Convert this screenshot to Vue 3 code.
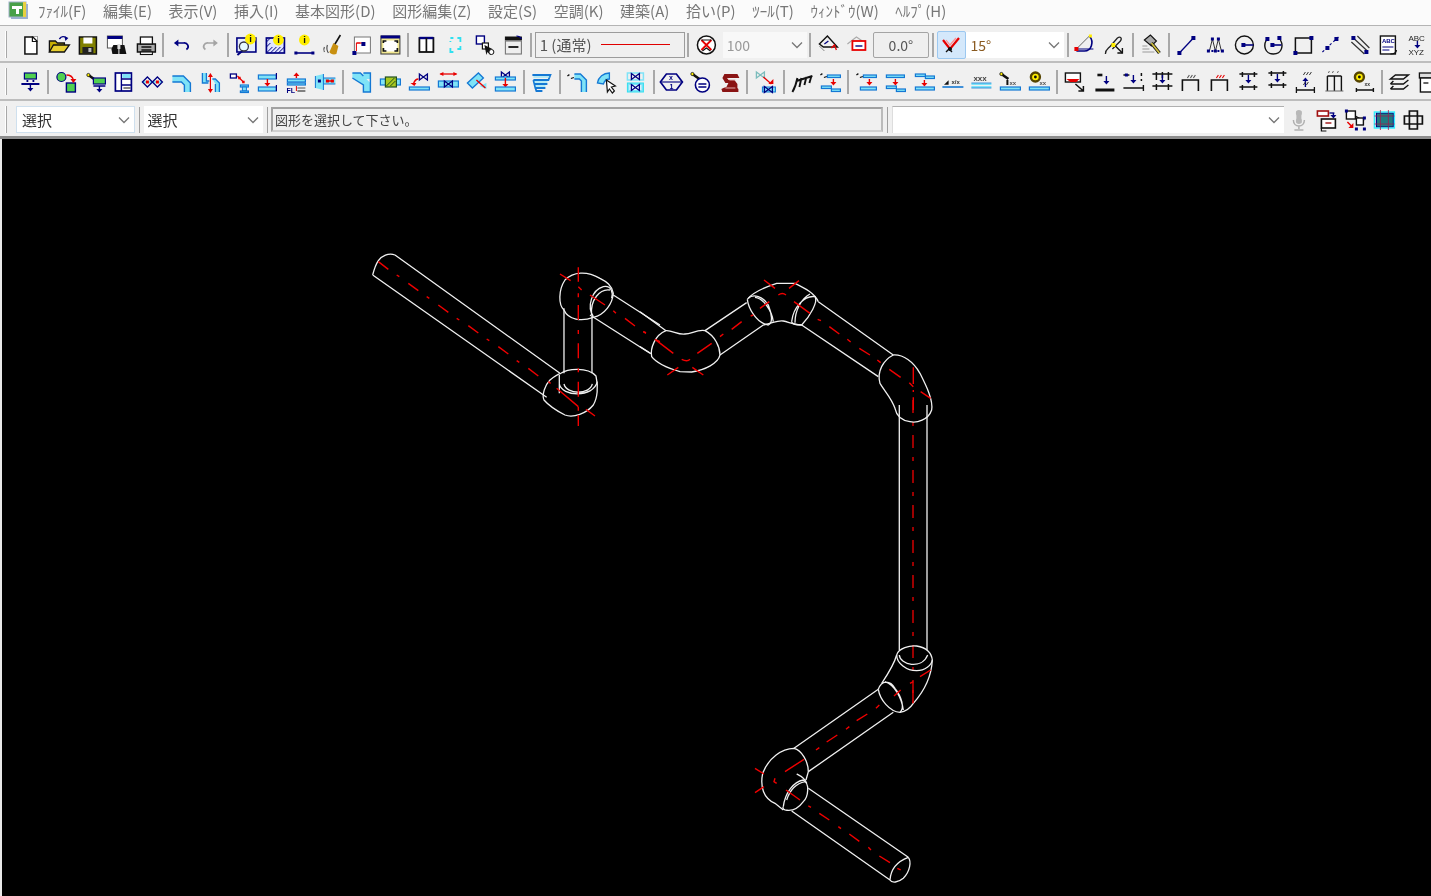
<script setup>
const NAVY = '#000080', CY = '#7fe3f7', BL = '#1478d4', RED = '#e80000', YE = '#ffee00', BK = '#111'
const l = (d, c = BK, w = 1.4) => `<path d="${d}" fill="none" stroke="${c}" stroke-width="${w}"/>`
const f = (d, c = BK) => `<path d="${d}" fill="${c}"/>`
const r = (x, y, w, h, fl = 'none', s = BK, sw = 1.4) => `<rect x="${x}" y="${y}" width="${w}" height="${h}" fill="${fl}" stroke="${s}" stroke-width="${sw}"/>`
const c = (x, y, rd, fl = 'none', s = BK, sw = 1.4) => `<circle cx="${x}" cy="${y}" r="${rd}" fill="${fl}" stroke="${s}" stroke-width="${sw}"/>`
const t = (x, y, s, sz = 6, col = BK, w = 700) => `<text x="${x}" y="${y}" font-size="${sz}" fill="${col}" font-weight="${w}" font-family="Liberation Sans, sans-serif">${s}</text>`
const dn = (x, y1, y2, col = NAVY) => l(`M${x} ${y1}V${y2 - 2}`, col, 1.4) + f(`M${x - 3} ${y2 - 3}h6l-3 3.5z`, col)
const up = (x, y1, y2, col = NAVY) => l(`M${x} ${y1}V${y2 + 2}`, col, 1.4) + f(`M${x - 3} ${y2 + 3}h6l-3 -3.5z`, col)
const duct = (x, y, w, h = 4) => r(x, y, w, h, CY, BL, 1.2)
const dot = (x, y, s = 3, col = NAVY) => `<rect x="${x - s / 2}" y="${y - s / 2}" width="${s}" height="${s}" fill="${col}"/>`
const info = (x, y) => c(x, y, 5.4, YE, 'none', 0) + t(x - 1.2, y + 3.4, 'i', 9.5, BK)
const valve = (x, y, col = NAVY) => l(`M${x - 4} ${y - 3}v6l8 -6v6z`, col, 1.3)
const gear = (x, y) => c(x, y, 4.5, YE, '#554400', 2.4) + c(x, y, 1.4, BK, 'none', 0)
const wrench = (x, y) => l(`M${x} ${y}l7 5`, BK, 2.6) + c(x, y, 1.6, YE, BK, .8)
const xx = (x, y, n = 'xx') => t(x, y, n, 6, '#555', 700)
const greenBox = (x, y) => r(x, y, 12, 6, '#50d050', NAVY, 1.2)
const dash3 = (x, y) => l(`M${x} ${y}l2 -1.4M${x + 3.5} ${y + 2.5}l3 -1`, BK, 1.3)
const arch = (col = BK) => l('M4 21V10H20V21', BK, 1.6) + l('M9 8l2 -3M12 8l2 -3M15 8l2 -3', col === BK ? '#555' : col, 1.1)

const icons = {
  new: r(6.5, 4, 12, 17, '#fff', BK, 1.5) + f('M14 3.5h5v5z', '#fff') + l('M14 3.5v5h5M14 3.5l5 5', BK, 1.2),
  open: f('M3 8h6l2 2h7v9H3z', '#c8b000') + l('M3 19V8h6l2 2h7v3', BK, 1.3) + f('M3 19l4 -7h16l-5 7z', '#e8d030') + l('M3 19l4 -7h16l-5 7z', BK, 1.3) + l('M13 6c2 -3 5 -3 7 -1', NAVY, 1.4) + f('M18 3l4 2 -3 3z', NAVY),
  save: r(4, 4, 17, 17, '#808000', BK, 1.5) + r(8, 4.5, 9, 6, '#fff', 'none', 0) + r(7, 14, 11, 6.5, '#222', 'none', 0) + r(13, 15, 3, 4, '#bbb', 'none', 0),
  find: r(3, 3, 15, 12, '#fff', '#555', 1) + r(3, 3, 15, 3, NAVY, 'none', 0) + f('M9 12h5v9H8l-1 -5zM15 12h5l2 9h-7z', BK) + r(13, 11, 3, 5, '#ddd', 'none', 0),
  print: f('M4 11h18v8H4z', '#aaa') + l('M4 11h18v8H4z', BK, 1.4) + r(7, 4, 12, 7, '#fff', BK, 1.3) + l('M8 14h10M8 17h10', BK, 1.4) + r(7, 19, 12, 2.5, '#fff', BK, 1.1),
  undo: l('M8 10h6a4 3.6 0 0 1 3 6.5', NAVY, 1.7) + f('M9 6.5v7L4.5 10z', NAVY),
  redo: l('M16 10h-6a4 3.6 0 0 0 -3 6.5', '#a4a4a4', 1.7) + f('M15 6.5v7L19.5 10z', '#a4a4a4'),
  zinfo: r(2.5, 5, 19, 14, '#e6eefc', NAVY, 1.6) + l('M8 18l-5 4', NAVY, 2) + c(9.5, 13.5, 4.5, '#e4f8ff', '#334', 1.3) + info(16, 6),
  hinfo: r(3, 5, 18, 15, '#dfe4ff', NAVY, 1.7) + l('M3 20l6 -6M7 20l6 -6M11 20l6 -6M15 20l6 -6M3 9l4 -4M3 14l4 -4', NAVY, 1) + info(15, 7),
  dinfo: info(12, 7) + l('M3 20H21', NAVY, 1.6) + dot(3.5, 20) + dot(20.5, 20),
  brush: l('M4 14c-1 2 -1 3 0 5M7 12c-1 3 -1 5 1 8', '#444', 1.1) + l('M20 2l-6 10', BK, 1.6) + f('M13 10l5 3 -2 8c-3 1 -6 0 -7 -2z', '#c89010'),
  sel: r(5, 4, 16, 16, '#fff', '#777', 1) + l('M7 18V10h6M7 10h4', RED, 1) + dot(14, 11, 4) + dot(5, 20, 4),
  full: r(2.5, 3, 19, 18, '#f2e890', '#444', 1.1) + r(2.5, 2.5, 19, 3, NAVY, 'none', 0) + r(5, 7.5, 14, 11, '#fff', 'none', 0) + l('M5 10V8h3M16 8h3v2M5 15v3h3M16 18h3v-3', BK, 1.7),
  panes: r(5, 5, 14, 14, '#fff', BK, 1.8) + l('M5 5h14', NAVY, 2.4) + l('M12 5v14', BK, 1.7),
  cyan: l('M7 5h3M14 5h3v4M17 13v3h-3M10 19h-3v-4M7 9v-1', '#30e0f0', 1.8),
  ovl: r(4, 3, 8, 8, '#fff', NAVY, 1.4) + r(10, 10, 6, 6, '#fff', BK, 1.2) + f('M12 12l8 4 -3 1 3 3 -2 2 -3 -3 -1 3z', BK) + c(19, 19, 2.5, '#fff', BK, 1),
  stack: r(4, 4, 16, 3, BK, BK, 1) + r(4, 8, 16, 13, '#eee', '#777', 1.1) + l('M7 14H17', BK, 1.8) + l('M15 3c3 0 4 1 5 3', NAVY, 1.1),
  norep: c(12, 12, 9, '#fff', BK, 1.5) + l('M7 7l10 10M17 7L7 17', RED, 1.8) + l('M8 18l4 -3 4 3', BK, 1.1) + l('M7 7h10', BK, 1),
  diamond: l('M3 11L11 3l10 11H7z', BK, 1.4) + l('M8 11l4 -3', NAVY, 1.3) + l('M15 15l3 -3 2 5', RED, 1.3) + l('M3 13l5 5', '#888', 1),
  tag: l('M2 11l9 -7 6 4', '#aaa', 1.1) + r(7, 8, 13, 9, '#fff', RED, 1.8) + l('M10 13H17', NAVY, 1.4),
  check: l('M4 7l7 9 9 -11', RED, 2.2) + l('M7 7l4 5 6 -7', '#ff9090', 1.2) + l('M7 19l3 -3 3 3', BK, 1.4) + c(11, 16, 2, BK, 'none', 0),
  arc: l('M3 16L16 3', '#555', .9) + l('M16 3c5 6 2 15 -5 15H3', NAVY, 1.6) + l('M3 16L20 16', NAVY, 1) + dot(3, 16, 4, RED) + dot(17, 3, 3, YE),
  cut: l('M3 21c0 -5 3 -5 6 -9l6 -7c3 -2 5 0 3 3l-8 8', '#222', 1.3) + dot(11, 12, 4, YE) + l('M13 13l7 7', BK, 1.4) + l('M20 15v5h-5', BK, 1.4),
  hammer: l('M4 19H16M4 16H11M4 13H9', '#999', 1.2) + f('M6 7l6 -5 6 6 -5 5z', '#aaa') + l('M6 7l6 -5 6 6 -5 5z', BK, 1.2) + l('M13 10l8 10', BK, 3.4) + l('M13 10l8 10', '#d0c040', 1.8),
  line: l('M5 20L19 5', NAVY, 1.3) + dot(5, 20, 4) + dot(19, 5, 4),
  mm: l('M6 18L9 6l3 12 3 -12 3 12', '#333', 1) + [5, 12, 19].map(x => dot(x, 18, 3)).join('') + [9, 15].map(x => dot(x, 6, 3)).join('') + dot(9, 18, 2) + dot(15, 18, 2),
  circ: c(12, 12, 9, 'none', BK, 1.4) + l('M12 12H21', NAVY, 1.6) + dot(11, 12, 4),
  arc2: l('M5 7c-3 5 -2 14 7 14s10 -9 7 -14', BK, 1.4) + l('M12 12H20', NAVY, 1.6) + dot(11, 12, 4) + dot(6, 6, 4) + dot(18, 5, 4),
  rect: r(5, 5, 16, 15, 'none', BK, 1.5) + dot(5, 20, 4) + dot(21, 5, 4),
  dline: `<path d="M4 19L20 4" fill="none" stroke="${NAVY}" stroke-width="1.1" stroke-dasharray="2.5 2.5"/>` + dot(9, 15, 4) + dot(18, 6, 4),
  par: l('M4 9L17 21M7 6L20 18M10 3L22 15', '#333', 1.2) + dot(6, 5, 4) + dot(19, 19, 4),
  abc: r(4, 3, 15, 18, '#fff', BK, 1.4) + t(5.5, 10, 'ABC', 6, NAVY) + l('M6 14H17M6 17H13', NAVY, 1.2) + l('M14 21c3 0 6 -1 6 -4', BK, 1.2),
  abcx: t(3, 8, 'ABC', 8, '#222', 400) + dn(12, 8, 15) + t(3, 22, 'XYZ', 8, '#222', 400),

  mach: greenBox(6, 3) + l('M9 10v2M15 10v2M3 14H21', NAVY, 1.8) + dn(12, 14, 21),
  swap: c(7, 7, 4.5, '#50d050', NAVY, 1.2) + r(12, 13, 9, 9, '#50d050', NAVY, 1.4) + l('M12 5c4 0 6 1 7 5', RED, 1.3) + f('M16 9h6l-3 4z', RED),
  mwr: wrench(5, 5) + greenBox(10, 8) + l('M10 16H22', NAVY, 1.5) + dn(16, 16, 22),
  table: r(4, 3, 16, 18, '#fff', NAVY, 1.7) + l('M10 3v18M10 9H20M10 15H20', NAVY, 1.4) + r(11, 4, 8, 4, CY, 'none', 0) + l('M12 18H19', BK, 1),
  dmd: l('M2 12H22', CY, 2) + l('M2 12l5 -5 5 5 -5 5z', NAVY, 1.3) + l('M12 12l5 -5 5 5 -5 5z', NAVY, 1.3) + dot(7, 12, 3, RED) + dot(17, 12, 3, RED),
  elbow: f('M3 6h11l7 7v9h-6v-7l-3 -3H3z', CY) + l('M3 6h11l7 7v9M3 12h9l3 3v7', BL, 1.4),
  riser: f('M4 3v10l6 0v-2H8V3zM14 9h3l4 4v9h-4v-8z', CY) + l('M4 3v10h6M8 3v8h3M14 9h3l4 4v9M17 22v-8', BL, 1.3) + l('M12 5V21', RED, 1.2) + f('M9.5 7h5L12 3zM9.5 19h5L12 23z', RED),
  stub: r(3, 4, 6, 4, '#fff', NAVY, 1.3) + l('M10 6l6 6', RED, 1.2) + dot(12, 8, 2.5, RED) + dot(16, 12, 2.5, RED) + duct(13, 15, 8, 2) + r(15, 17, 4, 4, CY, BL, 1) + duct(13, 21, 8, 1.5),
  twin: duct(3, 5, 18) + duct(3, 17, 18) + l('M21 3v6M21 15v6', NAVY, 1.2) + dn(12, 9, 16, RED),
  fl: duct(3, 9, 18, 3) + duct(3, 13, 18, 2) + up(12, 8, 3, RED) + t(2, 23, 'FL', 7, NAVY) + l('M12 21V16', RED, 1) + l('M13 21h8', BK, 1) + l('M13 18h8', '#555', 1),
  dctr: f('M2 6l8 -2v16l-8 -2zM10 8H22v6H10z', CY) + l('M10 4v16M10 8H22M10 14H22M2 6v12', BL, 1) + dot(6, 11, 3, NAVY) + l('M13 11H20', RED, 1.5) + dot(14, 11, 3, RED) + dot(19, 11, 3, RED),
  ysh: f('M3 3h8l10 10v9h-7v-7L3 8zM14 3h7v6h-7z', CY) + l('M3 3h8l3 3M14 3h7v19h-7v-7L3 8', BL, 1.4),
  hatch: duct(2, 9, 20, 6) + r(7, 7, 11, 10, '#a8c820', '#205020', 1.2) + l('M8 16l8 -8M12 16l5 -5', '#205020', 1),
  valvu: duct(2, 17, 20, 3) + valve(16, 7) + l('M6 14c1 -3 3 -5 5 -5', RED, 1.4) + f('M3 13h6l-2 3z', RED),
  arrv: l('M4 4H20', RED, 1.3) + f('M3 4l4 -2v4zM21 4l-4 -2v4z', RED) + duct(2, 11, 20, 6) + valve(12, 14),
  diag: f('M3 13L14 3l5 5L8 18zM15 16l7 -3v6z', CY) + l('M3 13L14 3l5 5L8 18z', BL, 1.3) + l('M12 10l9 8', RED, 1.4),
  vctr: valve(12, 5) + duct(2, 7, 20, 3) + dn(12, 8, 17, RED) + duct(2, 17, 20, 4),
  slant: l('M3 5H21L19 10H4M4 10l1 4H18M5 14l1 4H16M6 18l1 3h6', BL, 1.8) + l('M4 7H20M5 12H18M6 16H16', CY, 1.2),
  dselb: dash3(2, 6) + f('M9 4h6l6 6v12h-5V11l-2 -2H9z', CY) + l('M9 4h6l6 6v12M9 9h5l2 2v11', BL, 1.4),
  arcc: f('M3 13C4 7 9 3 15 3v6c-3 0 -5 2 -6 5z', CY) + l('M3 13C4 7 9 3 15 3v6c-3 0 -5 2 -6 5z', BL, 1.3) + f('M12 10l9 6 -4 1 3 4 -2 2 -3 -4 -2 3z', '#fff') + l('M12 10l9 6 -4 1 3 4 -2 2 -3 -4 -2 3z', BK, 1.2),
  vbox: r(4, 3, 16, 7, 'none', CY, 1.5) + valve(12, 6.5, NAVY) + r(4, 13, 16, 9, CY, '#30e0f0', 1) + r(6, 15, 12, 5, '#e8faff', 'none', 0) + valve(12, 17.5, NAVY),
  hex: l('M7 4H17L23 12 17 20H7L1 12z', NAVY, 1.7) + l('M2 12H22', NAVY, 1.1) + t(9.5, 10, 'x', 7, NAVY) + t(10, 18.5, '1', 7, NAVY),
  wcirc: wrench(4, 4) + c(14, 15, 7, '#fff', NAVY, 1.6) + l('M10 14H18M10 17H18', NAVY, 1.5),
  beam: f('M7 4h13l2 4H10l1 2h6l3 4v4l1 1v3H5l-1 -3 2 -1 3 -1 2 -4H8L5 8z', '#8a1414') + l('M10 8l2 2h6M8 18h10', '#e0b0b0', 1),
  vpale: valve(7, 5, '#7bbcbc') + l('M10 7l8 7', RED, 1.3) + f('M15 14h5v-5z', RED) + r(9, 17, 13, 5, CY, BL, 1) + valve(15, 19.5),
  hash: l('M3 22C6 17 7 13 8 8M10 17l2 -9M15 15l2 -8M20 13l2 -7M7 11L23 6', BK, 1.9),
  dd: dash3(2, 5) + duct(9, 5, 13, 2.5) + dn(15, 9, 15, RED) + duct(3, 16, 10, 2.5) + duct(13, 19, 9, 2.5),
  dd2: dash3(2, 5) + duct(9, 5, 13, 2.5) + dn(15, 9, 15, RED) + duct(6, 17, 16, 3),
  dd3: duct(3, 5, 18, 2.5) + dn(12, 9, 15, RED) + duct(3, 16, 10, 2.5) + duct(13, 19, 9, 2.5),
  dd4: duct(3, 4, 10, 2.5) + duct(13, 6, 9, 2.5) + dn(12, 10, 16, RED) + duct(3, 17, 19, 3),
  dxx: t(3, 14, '◢', 6, BK, 400) + t(10, 14, 'x/x', 6, '#333') + l('M1 17H22', BL, 1.6),
  xxx: t(4, 11, 'xxx', 8, '#444') + l('M2 14H22', CY, 2) + l('M2 17H22', CY, 2) + l('M2 13H22M2 18H22', BL, .8),
  wxx: wrench(3, 4) + l('M9 10v5', BK, 2) + xx(11, 15) + duct(2, 17, 20, 3),
  gxx: gear(8, 7) + xx(12, 15) + duct(2, 17, 20, 3),
  red: r(2, 3, 15, 9, '#fff', BK, 1.4) + f('M3 9h13l-3 3H7z', RED) + l('M12 14l8 7M20 16v5h-5', BK, 1.5),
  barr: l('M5 5h5', BK, 2.6) + dn(14, 6, 14) + l('M3 20H22', BK, 3),
  barm: l('M2 5H8M2 18H22M22 15v6', BK, 1.4) + dot(5, 5, 3) + dn(12, 5, 13) + l('M20 3v3M20 9v2', BK, 1.5),
  hh: l('M2 4H22M2 16H22M6 2v8M12 2v6M18 2v8M6 14v6M18 14v6', BK, 1.5) + dn(12, 5, 13),
  ar1: arch(),
  ar2: arch(RED),
  ar3: l('M3 4H21M3 17H21M6 2v5M18 2v5M6 15v5M18 15v5', BK, 1.5) + dn(12, 5, 13),
  ar4: l('M3 3H21M3 15H21M6 1v5M18 1v5M6 13v5M18 13v5', BK, 1.5) + dn(12, 4, 12),
  ar5: l('M3 20H21M3 17v6M21 17v6', BK, 1.3) + up(12, 17, 8) + l('M10 5l2 -3M13 5l2 -3M16 5l2 -3M10 15l2 -3M13 15l2 -3', '#333', 1),
  ar6: l('M5 6V21M12 6V21M19 6V21M5 6H19', BK, 1.4) + l('M6 3l1 -2M10 3l1 -2M15 3l1 -2M3 21H21', '#666', 1),
  ar7: gear(8, 7) + l('M5 20H22M5 18v4M22 18v4', BK, 1.4) + t(13, 16, 'xx', 5, '#333'),
  lay: l('M3 9l5 -4H21l-5 4zM3 14H16l5 -4M3 14l3 -3M3 19H16l5 -4M3 19l3 -3', BK, 1.4),
  box: r(3, 3, 18, 5, '#ddd', BK, 1.3) + r(4, 8, 16, 14, '#fff', BK, 1.4) + l('M7 13H12', BK, 1.3),

  mic: r(10, 3, 5, 12, '#b8b8b8', 'none', 0) + c(12.5, 5, 3, '#b8b8b8', 'none', 0) + c(12.5, 13, 3, '#b8b8b8', 'none', 0) + l('M7 12c0 8 11 8 11 0M12.5 18v3M8 22H17', '#b0b0b0', 1.5),
  moveBox: r(3, 3, 11, 5, '#fff', '#a01010', 1.6) + l('M15 5H20', NAVY, 1.3) + dn(19, 5, 10) + r(7, 11, 14, 9, '#fff', BK, 1.6) + l('M7 20v3h5', BK, 1.2) + l('M11 15H17', '#a01010', 1.4),
  dotBox: r(3, 3, 9, 8, '#fff', BK, 1.4) + l('M12 8l5 3 4 1', BK, 1.2) + r(13, 10, 7, 7, '#fff', BK, 1.4) + dot(3, 3, 3, NAVY) + dot(21, 10, 3, NAVY) + dot(21, 21, 3, NAVY) + dot(13, 21, 3, NAVY) + l('M4 14l4 4', RED, 1.5) + f('M5 20h5v-5z', RED),
  grid: r(4, 5, 17, 14, '#1f7a80', NAVY, 1.1) + r(2, 4, 20, 16, 'none', '#30f0ff', 1.4) + l('M8 2v20M16 2v20M2 8h20M2 16h20', '#9a2050', .8),
  cross: l('M8 3H16V8H21V16H16V21H8V16H3V8H8zM8 8H16V16H8z', BK, 1.7),
}

const seq = s => s.split(' ').map(k => (k === '|' ? { sep: true } : { k }))
const row1a = seq('new open save find print | undo redo | zinfo hinfo dinfo brush sel full | panes cyan ovl stack |')
const row1b = seq('arc cut | hammer | line mm circ arc2 rect dline par abc abcx')
const row2 = seq('mach | swap mwr table dmd elbow riser stub twin fl dctr | ysh hatch valvu arrv diag vctr | slant | dselb arcc vbox | hex wcirc beam | vpale | hash dd | dd2 dd3 dd4 dxx xxx wxx gxx | red barr barm hh ar1 ar2 ar3 ar4 ar5 ar6 ar7 | lay box')
const row3 = seq('moveBox dotBox grid cross')
const menu = ['ﾌｧｲﾙ(F)', '編集(E)', '表示(V)', '挿入(I)', '基本図形(D)', '図形編集(Z)', '設定(S)', '空調(K)', '建築(A)', '拾い(P)', 'ﾂｰﾙ(T)', 'ｳｨﾝﾄﾞｳ(W)', 'ﾍﾙﾌﾟ(H)']
</script>

<template>
  <div class="app">
    <div class="menubar">
      <svg class="logo" width="22" height="20" viewBox="0 0 22 20">
        <rect x="3" y="3" width="17" height="15" fill="#9ab0d0" />
        <rect x="1" y="1" width="17" height="15" fill="#48a048" stroke="#a0b0c8" />
        <rect x="4" y="5" width="10" height="3" fill="#fff" />
        <rect x="8" y="8" width="3" height="5" fill="#fff" />
        <rect x="15" y="1" width="3" height="15" fill="#e8d040" />
      </svg>
      <span v-for="m in menu" :key="m" class="menuitem">{{ m }}</span>
    </div>

    <div class="bar bar1">
      <i class="grip" />
      <template v-for="(it, n) in row1a" :key="'a' + n">
        <i v-if="it.sep" class="sep" />
        <svg v-else class="ico" viewBox="0 0 24 24" v-html="icons[it.k]" />
      </template>
      <div class="linecombo">
        <span>1 (通常)</span>
        <i class="redline" />
      </div>
      <i class="sep" />
      <svg class="ico" viewBox="0 0 24 24" v-html="icons.norep" />
      <div class="combo combo100 disabled"><span>100</span><svg class="chev" viewBox="0 0 12 8"><path d="M1 1.5l5 5 5-5" /></svg></div>
      <i class="sep" />
      <svg class="ico" viewBox="0 0 24 24" v-html="icons.diamond" />
      <svg class="ico" viewBox="0 0 24 24" v-html="icons.tag" />
      <div class="angle">0.0°</div>
      <i class="sep" />
      <div class="activebtn"><svg class="ico" viewBox="0 0 24 24" v-html="icons.check" /></div>
      <div class="combo combo15"><span>15°</span><svg class="chev" viewBox="0 0 12 8"><path d="M1 1.5l5 5 5-5" /></svg></div>
      <i class="sep" />
      <template v-for="(it, n) in row1b" :key="'b' + n">
        <i v-if="it.sep" class="sep" />
        <svg v-else class="ico" viewBox="0 0 24 24" v-html="icons[it.k]" />
      </template>
    </div>

    <div class="bar bar2">
      <i class="grip" />
      <template v-for="(it, n) in row2" :key="'c' + n">
        <i v-if="it.sep" class="sep" />
        <svg v-else class="ico" viewBox="0 0 24 24" v-html="icons[it.k]" />
      </template>
    </div>

    <div class="bar bar3">
      <i class="grip grip3" />
      <div class="combo sel1"><span>選択</span><svg class="chev" viewBox="0 0 12 8"><path d="M1 1.5l5 5 5-5" /></svg></div>
      <i class="grip3b" />
      <div class="combo sel2"><span>選択</span><svg class="chev" viewBox="0 0 12 8"><path d="M1 1.5l5 5 5-5" /></svg></div>
      <i class="grip3b" />
      <div class="prompt">図形を選択して下さい。</div>
      <i class="grip3b" />
      <div class="combo sel3"><span></span><svg class="chev" viewBox="0 0 12 8"><path d="M1 1.5l5 5 5-5" /></svg></div>
      <svg class="ico mic" viewBox="0 0 24 24" v-html="icons.mic" />
      <svg v-for="it in row3" :key="it.k" class="ico" viewBox="0 0 24 24" v-html="icons[it.k]" />
    </div>

    <div class="canvas">
      <svg class="drawing" viewBox="2 139 1429 757" width="1429" height="757">
        <!-- long vertical run -->
        <g class="wh"><path d="M899.3 405V650M927 405V650" /></g>
        <path class="rd" d="M913 400V703" stroke-dasharray="13 9 4 9" />

        <g transform="translate(360 240) scale(.3333)">
          <g class="wh z">
            <path d="M105 45L600 400M38 105L560 472M38 105C42 90 48 72 55 62C65 48 85 38 105 45" />
            <path d="M612 205V400M696 230V400" />
            <path d="M603 400C620 388 680 378 708 408C716 440 712 475 700 495C680 520 640 535 615 525C595 515 565 495 552 480C545 465 555 435 570 420C582 410 595 402 603 400" />
            <path d="M612 432C620 465 690 465 697 432M598 432C605 470 700 475 712 425M598 405V460" />
            <path d="M612 210C595 195 595 150 615 120C640 95 680 92 720 115C740 125 755 135 760 160C758 190 735 225 700 232C665 245 625 240 612 210" />
            <path d="M700 230C680 200 695 150 730 140C755 135 760 160 755 175M695 225C690 180 720 145 750 150" />
            <path d="M760 165L900 255M690 225L870 340" />
          </g>
          <g class="rd z">
            <path d="M55 65L85 88M110 105L118 110M145 130L175 152M200 170L208 175M235 195L265 217M290 235L298 240M325 257L355 279M380 297L388 302M415 320L445 342M470 362L478 367M505 385L535 408" />
            <path d="M565 425L572 430M590 445L655 500M678 508L705 528M600 102L632 122M655 140L665 150M690 165L735 195M760 212L768 220M795 235L825 258M850 275L858 280M885 298L900 305" />
            <path d="M655 82V125M655 160V172M655 195V240M655 270V282M655 310V355M655 385V397M655 425V470M655 500V512M655 525V558" />
          </g>
        </g>

        <g transform="translate(640 260) scale(.3333)">
          <g class="wh z">
            <path d="M0 155L78 212M0 260L35 282" />
            <path d="M78 212C95 210 115 225 135 222C155 222 170 208 195 212C225 228 240 260 240 285C235 310 195 330 155 336L120 335C85 325 50 310 35 290C30 265 45 225 78 212" />
            <path d="M195 212L320 128M240 285L370 195" />
            <path d="M322 118C335 100 365 85 410 70L465 70C495 85 525 100 535 125M370 195C400 190 410 180 430 183C445 185 460 195 485 195" />
            <path d="M322 118C325 145 350 190 385 195C400 190 395 160 385 135C370 110 340 100 325 115M345 112C370 115 395 150 400 185" />
            <path d="M455 185C460 140 495 105 525 110C535 125 510 170 485 195C465 195 455 190 455 185M465 188C465 150 485 115 510 102" />
            <path d="M535 125L760 285M485 195L715 350" />
            <path d="M760 285C790 283 820 305 840 340C860 380 880 420 875 450C865 480 830 490 810 485C790 482 770 470 765 445C755 415 735 395 720 370C710 335 730 300 760 285" />
          </g>
          <g class="rd z">
            <path d="M10 215L18 218M45 238L100 280M125 298C135 303 145 303 150 298M172 280L215 250M240 230L250 222M275 208L305 185M332 168L340 165M360 145L388 125M372 60L405 85M477 62L447 85M415 105C422 100 432 100 438 105M462 125L510 160M533 178L543 182M568 200L598 222M622 238L632 246M658 265L690 285M712 300L722 308M748 328L782 352M808 368L820 380M842 395L872 415M82 345L115 322M157 322L190 345" />
            <path d="M820 322V372M820 390V396M820 412V450" />
          </g>
        </g>

        <g transform="translate(740 630) scale(.3333)">
          <g class="wh z">
            <path d="M470 75C475 55 510 45 530 48C560 52 575 70 577 90M470 75C470 100 500 122 530 122C555 122 575 105 577 90M478 75C480 105 545 120 563 75" />
            <path d="M577 90C575 130 560 175 520 220C510 235 495 245 480 247M470 75C462 105 445 130 425 160" />
            <path d="M415 178C425 150 450 150 465 175C485 200 495 235 480 247C450 245 420 210 415 178M435 155C465 165 485 205 490 240" />
            <path d="M415 178L162 355M460 247L205 425" />
            <path d="M162 355C125 355 85 385 68 430C60 470 70 505 105 520L130 540M162 355C185 360 205 395 205 425L198 450M170 432C185 440 195 445 200 460" />
            <path d="M130 530C135 490 160 455 190 450C210 460 205 500 190 515C175 535 155 545 135 540C128 538 128 532 130 530M140 510C150 480 170 460 195 455" />
            <path d="M205 475L505 682M155 543L450 750M505 682C515 695 510 725 490 745C475 758 455 760 450 750C452 720 470 695 505 682" />
          </g>
          <g class="rd z">
            <path d="M540 140L572 120M510 160L520 155M462 198L482 180M408 235L418 225M350 272L382 252M318 298L328 290M260 336L292 315M228 360L238 353M135 425L192 388M105 445L102 455L110 460M45 415L72 432M45 488L72 470M138 480L180 510M205 528L213 532M238 550L268 570M295 590L303 596M328 612L358 634M385 652L393 660M418 678L450 698M472 715L482 720M519 180V220" />
          </g>
        </g>
      </svg>
    </div>
  </div>
</template>

<style>
html, body { margin: 0; overflow: hidden; background: #000; }
</style>

<style scoped>
.app {
  width: 1431px;
  height: 896px;
  display: flex;
  flex-direction: column;
  overflow: hidden;
  background: #f0f0f0;
  font-family: "Noto Sans CJK JP", "Liberation Sans", sans-serif;
  color: #333;
}
.menubar {
  height: 25px;
  display: flex;
  align-items: center;
  background: #fbfbfb;
  border-bottom: 1px solid #b4b4b4;
  padding-left: 8px;
  font-size: 15px;
  line-height: 20px;
  color: #777;
  filter: blur(.3px);
  flex: none;
}
.logo { margin-right: 8px; flex: none; margin-bottom: 3px; }
.menuitem { margin-right: 16.6px; margin-bottom: 4px; white-space: nowrap; }
.bar {
  display: flex;
  align-items: center;
  box-sizing: border-box;
  background: #f0f0f0;
  overflow: hidden;
  border-bottom: 2px solid #bdbdbd;
  flex: none;
  filter: blur(.25px);
}
.bar1 { height: 37px; padding-top: 2px; }
.bar2 { height: 38px; padding-top: 1px; }
.bar3 { height: 38px; padding-top: 2px; border-bottom: 3px solid #8d8d8d; }
.grip {
  flex: none;
  width: 2px;
  height: 27px;
  margin: 0 9px 0 4.65px;
  border-left: 1px solid #fff;
  border-right: 1px solid #a8a8a8;
  box-sizing: border-box;
}
.grip3 { margin-right: 9px; margin-left: 5px; }
.grip3b {
  flex: none;
  width: 2px;
  height: 26px;
  margin: 0 3.5px 0 3px;
  border-right: 1px solid #a0a0a0;
  box-sizing: border-box;
}
.sep {
  flex: none;
  width: 2px;
  height: 24px;
  margin: 0 2.7px;
  background: #a8a8a8;
}
.ico {
  flex: none;
  width: 28.8px;
  height: 24px;
}
.linecombo {
  flex: none;
  box-sizing: border-box;
  width: 150px;
  height: 26px;
  border: 1px solid #9c9c9c;
  display: flex;
  align-items: center;
  padding-left: 4px;
  font-size: 15px;
  color: #555;
}
.linecombo span { width: 61px; white-space: nowrap; }
.redline { width: 69px; height: 1px; background: #e00000; }
.combo {
  flex: none;
  box-sizing: border-box;
  height: 26px;
  display: flex;
  align-items: center;
  justify-content: space-between;
  background: #fff;
  padding: 0 4px;
  font-size: 14px;
  color: #444;
}
.chev { width: 12px; height: 8px; fill: none; stroke: #777; stroke-width: 1.3; }
.combo100 { width: 84px; margin-left: 1.8px; background: #f8f8f8; color: #999; }
.angle {
  flex: none;
  box-sizing: border-box;
  width: 56px;
  height: 26px;
  margin-left: 1.3px;
  border: 1px solid #a4a4a4;
  border-radius: 2px;
  background: #efefef;
  display: flex;
  align-items: center;
  justify-content: center;
  font-size: 14px;
  color: #555;
}
.activebtn {
  flex: none;
  box-sizing: border-box;
  width: 29px;
  height: 28px;
  margin-left: .6px;
  display: flex;
  align-items: center;
  justify-content: center;
  background: #d4e8fb;
  border: 1px solid #9cc8f0;
  border-radius: 2px;
}
.activebtn .ico { width: 24px; }
.combo15 { width: 97.5px; margin-left: .5px; color: #8a5a20; }
.sel1, .sel2, .sel3 { height: 27px; font-size: 15px; color: #333; }
.sel1 { width: 119px; padding-left: 5px; border: 1px solid #cfe0ee; }
.sel2 { width: 119px; padding-left: 4px; }
.sel3 { width: 392px; border-top: 1px solid #b0b0b0; border-left: 1px solid #ddd; }
.prompt {
  flex: none;
  box-sizing: border-box;
  width: 612px;
  height: 25px;
  display: flex;
  align-items: center;
  padding-left: 2px;
  border: 2px solid #a2a2a2;
  border-right-color: #bbb;
  border-bottom-color: #d0d0d0;
  font-size: 13px;
  color: #444;
}
.mic { margin-left: 0; }
.canvas {
  flex: 1;
  min-height: 0;
  background: #000;
  border-left: 2px solid #e8e8e8;
  overflow: hidden;
}
.drawing { display: block; }
.wh { fill: none; stroke: #f0f0f0; stroke-width: 1.3; }
.wh.z { stroke-width: 3.9; }
.rd { fill: none; stroke: #f00000; stroke-width: 1.3; }
.rd.z { stroke-width: 4.2; }
</style>
